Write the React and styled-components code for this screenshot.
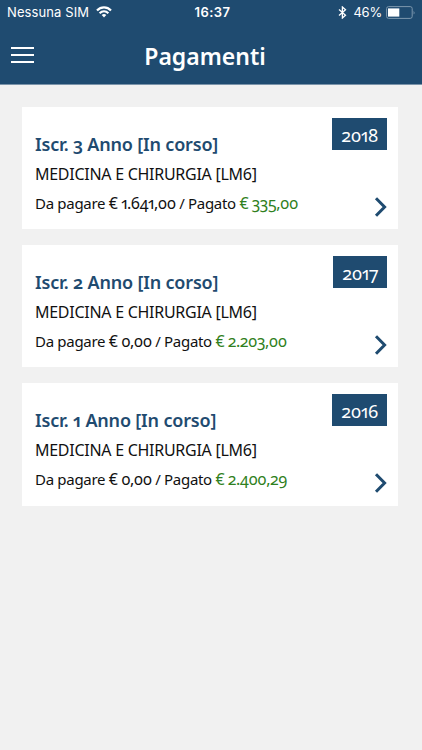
import styled, { createGlobalStyle } from 'styled-components';

const payments = [
  { year: '2018', title: 'Iscr. 3 Anno [In corso]', due: '1.641,00', paid: '335,00' },
  { year: '2017', title: 'Iscr. 2 Anno [In corso]', due: '0,00', paid: '2.203,00' },
  { year: '2016', title: 'Iscr. 1 Anno [In corso]', due: '0,00', paid: '2.400,29' },
]

function StatusBar() {
  return (
    <Status>
      <Carrier>
        <span>Nessuna SIM</span>
        <svg width="16" height="12" viewBox="0 0 16 12" fill="none" stroke="#fff" strokeWidth="2.2">
          <path d="M1 4.6C5 .4 11 .4 15 4.6" />
          <path d="M3.6 7.2C6.2 4.7 9.8 4.7 12.4 7.2" />
          <path d="M8 11.4L5.7 9C7 7.8 9 7.8 10.3 9Z" fill="#fff" stroke="none" />
        </svg>
      </Carrier>
      <Clock>16:37</Clock>
      <Power>
        <svg width="9" height="13" viewBox="0 0 9 13" fill="none" stroke="#fff" strokeWidth="1.3">
          <path d="M1 3.6L7.5 9.2L4.4 12V1L7.5 3.8L1 9.4" />
        </svg>
        <span>46%</span>
        <svg width="30" height="13" viewBox="0 0 30 13">
          <rect x=".6" y=".6" width="25.6" height="11.8" rx="2" fill="none" stroke="#7d98ae" />
          <rect x="2" y="2.4" width="11.3" height="8.2" fill="#fff" />
          <path d="M27.6 4.5Q29.4 6.5 27.6 8.5Z" fill="#7d98ae" />
        </svg>
      </Power>
    </Status>
  )
}

function PaymentCard({ payment }) {
  return (
    <Card>
      <Details>
        <CardTitle>{payment.title}</CardTitle>
        <Course>MEDICINA E CHIRURGIA [LM6]</Course>
        <Amounts>
          Da pagare <Sum>€ {payment.due}</Sum> / Pagato <Sum $paid>€ {payment.paid}</Sum>
        </Amounts>
      </Details>
      <Side>
        <Year>{payment.year}</Year>
        <svg width="13" height="20" viewBox="0 0 13 20" fill="none" stroke="#1f4b70" strokeWidth="3">
          <path d="M2 1.2L10.6 10L2 18.8" />
        </svg>
      </Side>
    </Card>
  )
}

function App() {
  return (
    <Screen>
      <GlobalStyle />
      <Header>
        <StatusBar />
        <Nav>
          <Menu aria-label="Menu">
            <span />
            <span />
            <span />
          </Menu>
          <h1>Pagamenti</h1>
        </Nav>
      </Header>
      <List>
        {payments.map((payment) => (
          <PaymentCard key={payment.year} payment={payment} />
        ))}
      </List>
    </Screen>
  );
}

const GlobalStyle = createGlobalStyle`
*{
  box-sizing:border-box;
}
body{
  margin:0;
  background-color:#f1f1f1;
}
`
const Screen = styled.div`
min-height:100vh;
background-color:#f1f1f1;
font-family:"Noto Sans", sans-serif;
font-variant-numeric:oldstyle-nums proportional-nums;
`
const Header = styled.header`
height:85px;
background-color:#1f4b70;
border-bottom:1px solid #7b94aa;
color:#fff;
`
const Status = styled.div`
display:grid;
grid-template-columns:1fr auto 1fr;
align-items:center;
height:24px;
padding:0 6px 0 7px;
font-family:Inter, sans-serif;
font-variant-numeric:normal;
font-size:13px;
line-height:24px;
svg{
  flex:none;
}
`
const Carrier = styled.div`
display:flex;
align-items:center;
gap:7px;
letter-spacing:0.1px;
`
const Clock = styled.div`
padding-left:2px;
font-weight:600;
letter-spacing:0.5px;
`
const Power = styled.div`
display:flex;
align-items:center;
justify-content:flex-end;
gap:4px;
span{
  margin-left:2px;
  letter-spacing:-0.2px;
}
`
const Nav = styled.nav`
display:grid;
grid-template-columns:60px 1fr 72px;
align-items:center;
height:62px;
padding:0 11px;
h1{
  margin:0;
  padding-top:1px;
  font-size:23px;
  font-weight:600;
  line-height:36px;
  text-align:center;
}
`
const Menu = styled.button`
display:flex;
flex-direction:column;
gap:5px;
width:23px;
padding:0;
border:0;
background:none;
span{
  height:2px;
  background-color:#fff;
}
`
const List = styled.main`
display:flex;
flex-direction:column;
gap:16px;
padding:22px 24px 0 22px;
`
const Card = styled.article`
display:flex;
justify-content:space-between;
height:122.2px;
padding:11px 11px 12.5px 13px;
background-color:#fff;
`
const Details = styled.div`
padding-top:11px;
white-space:nowrap;
`
const CardTitle = styled.h2`
margin:0 0 1px;
color:#1f4b70;
font-size:18px;
font-weight:600;
line-height:30px;
letter-spacing:-0.18px;
`
const Course = styled.p`
margin:0;
color:#111;
font-size:16px;
line-height:29px;
letter-spacing:-0.27px;
`
const Amounts = styled.p`
margin:0;
color:#111;
font-size:15px;
line-height:28px;
letter-spacing:-0.3px;
`
const Sum = styled.span`
color:${({ $paid }) => ($paid ? '#2f8020' : 'inherit')};
font-size:16px;
line-height:1;
letter-spacing:-0.5px;
`
const Side = styled.div`
display:flex;
flex-direction:column;
align-items:flex-end;
justify-content:space-between;
`
const Year = styled.div`
height:32px;
padding:0 9px;
background-color:#1f4b70;
color:#fff;
font-size:18px;
line-height:34px;
letter-spacing:-0.3px;
`

export default App
